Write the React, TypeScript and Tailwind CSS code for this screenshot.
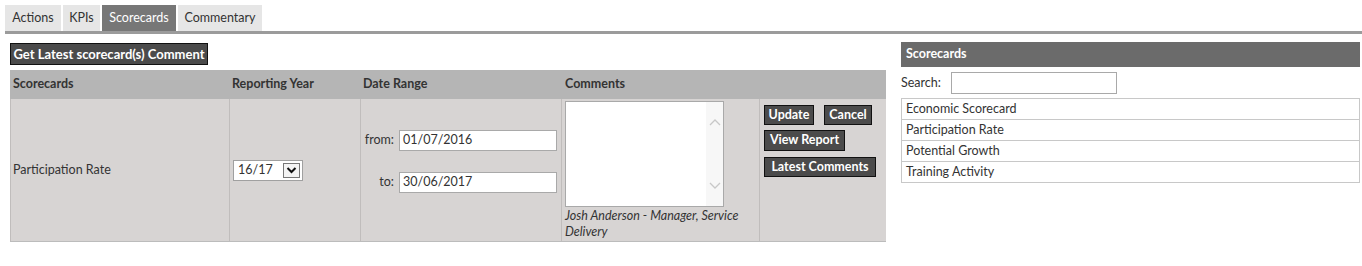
import React from 'react';

const font = { fontFamily: 'Lato, "Open Sans", Arial, sans-serif' };

const tabs = [
  { name: 'Actions', w: 'w-[56px]' },
  { name: 'KPIs', w: 'w-[37px]' },
  { name: 'Scorecards', w: 'w-[74px]' },
  { name: 'Commentary', w: 'w-[84px]' },
];
const scorecards = ['Economic Scorecard', 'Participation Rate', 'Potential Growth', 'Training Activity'];

function DarkButton({ label, className = '' }: { label: string; className?: string }) {
  return (
    <div
      className={`h-[20px] flex items-center justify-center whitespace-nowrap bg-[#4b4b4b] border border-[#111] text-white text-[12.5px] font-bold leading-none ${className}`}
    >
      {label}
    </div>
  );
}

function DateField({ label, value }: { label: string; value: string }) {
  return (
    <div className="flex items-center">
      <span className="w-[30px] text-right text-[12.5px] text-[#333]">{label}</span>
      <div className="ml-[5px] w-[158px] h-[21px] bg-white border border-[#a9a9a9] flex items-center pl-[3px] text-[12.5px] text-[#333]">
        {value}
      </div>
    </div>
  );
}

export default function App() {
  return (
    <div className="w-[1362px] h-[266px] bg-white text-[#333] text-[12.5px]" style={font}>
      {/* Tabs */}
      <div className="flex gap-[2px] pl-[5px] pt-[5px]">
        {tabs.map((t) => (
          <div
            key={t.name}
            className={`h-[26px] ${t.w} flex items-center justify-center pt-[1px] ${
              t.name === 'Scorecards' ? 'bg-[#777] text-white' : 'bg-[#e6e6e6] text-[#333]'
            }`}
          >
            {t.name}
          </div>
        ))}
      </div>
      <div className="ml-[5px] h-[3px] bg-[#9b9b9b]" />

      <div className="flex">
        {/* Left: scorecard editor */}
        <div className="pl-[10px] w-[886px]">
          <DarkButton label="Get Latest scorecard(s) Comment" className="mt-[9px] w-[198px] h-[22px] text-[13px]" />

          <div className="mt-[5px] w-[876px] border-b border-[#bcbcbc]">
            {/* header */}
            <div className="flex h-[29px] bg-[#b5b5b5] font-bold text-[#333] items-center">
              <div className="w-[219px] pl-[3px]">Scorecards</div>
              <div className="w-[131px] pl-[3px]">Reporting Year</div>
              <div className="w-[201px] pl-[3px]">Date Range</div>
              <div className="w-[198px] pl-[4px]">Comments</div>
              <div className="flex-1" />
            </div>
            {/* body row */}
            <div className="flex h-[142px] bg-[#d7d4d3]">
              <div className="w-[219px] border-l border-[#c0bdbc] flex items-center pl-[2px]">Participation Rate</div>
              <div className="w-[131px] border-l border-[#c0bdbc] flex items-center pl-[3px]">
                <div className="w-[70px] h-[21px] bg-white border border-[#a0a0a0] flex items-center justify-between pl-[4px] pr-[2px]">
                  <span>16/17</span>
                  <div className="w-[17px] h-[15px] border border-[#777] bg-[#f4f4f4] flex items-center justify-center">
                    <svg width="11" height="8" viewBox="0 0 11 8">
                      <path d="M1.5 2 L5.5 6 L9.5 2" fill="none" stroke="#111" strokeWidth="2" />
                    </svg>
                  </div>
                </div>
              </div>
              <div className="w-[201px] border-l border-[#c0bdbc] flex flex-col gap-[21px] pt-[31px] pl-[3px]">
                <DateField label="from:" value="01/07/2016" />
                <DateField label="to:" value="30/06/2017" />
              </div>
              <div className="w-[198px] border-l border-[#c0bdbc] pl-[3px] pt-[2px]">
                <div className="w-[159px] h-[106px] bg-white border border-[#a9a9a9] flex justify-end">
                  <div className="w-[17px] h-full bg-[#f7f7f7] flex flex-col items-center justify-between py-[16px]">
                    <svg width="12" height="8" viewBox="0 0 12 8">
                      <path d="M1 7 L6 2 L11 7" fill="none" stroke="#c8c8c8" strokeWidth="1.3" />
                    </svg>
                    <svg width="12" height="8" viewBox="0 0 12 8">
                      <path d="M1 1 L6 6 L11 1" fill="none" stroke="#c8c8c8" strokeWidth="1.3" />
                    </svg>
                  </div>
                </div>
                <div className="italic leading-[16px] mt-[1px] text-[#333] w-[180px]">
                  Josh Anderson - Manager, Service Delivery
                </div>
              </div>
              <div className="flex-1 border-l border-[#c0bdbc] pl-[4px] pt-[6px]">
                <div className="flex gap-[10px]">
                  <DarkButton label="Update" className="w-[50px]" />
                  <DarkButton label="Cancel" className="w-[48px]" />
                </div>
                <DarkButton label="View Report" className="mt-[5px] w-[81px] h-[21px] border-[#1d5a78]" />
                <DarkButton label="Latest Comments" className="mt-[6px] w-[112px]" />
              </div>
            </div>
          </div>
        </div>

        {/* Right: scorecards list */}
        <div className="ml-[15px] w-[459px]">
          <div className="mt-[8px] h-[25px] bg-[#6b6b6b] text-white font-bold flex items-center pl-[5px]">
            Scorecards
          </div>
          <div className="mt-[5px] flex items-center">
            <span className="w-[50px]">Search:</span>
            <div className="w-[166px] h-[22px] bg-white border border-[#a9a9a9]" />
          </div>
          <div className="mt-[4px] border-t border-[#c8c8c8]">
            {scorecards.map((s) => (
              <div key={s} className="h-[21px] border-x border-b border-[#c8c8c8] flex items-center pl-[4px]">
                {s}
              </div>
            ))}
          </div>
        </div>
      </div>
    </div>
  );
}
